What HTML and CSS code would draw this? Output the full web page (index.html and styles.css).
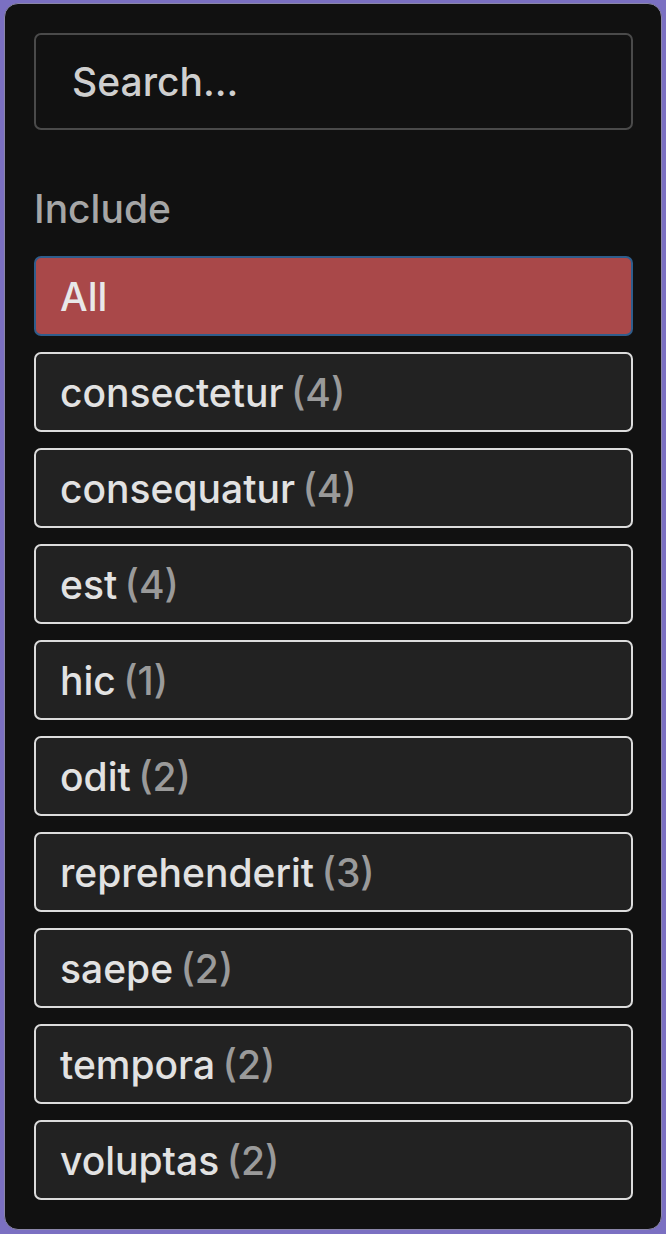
FILE: index.html
```html
<!DOCTYPE html>
<html>
<head>
<meta charset="utf-8">
<link rel="stylesheet" href="styles.css">
</head>
<body>
<div class="panel">
  <input class="search" type="text" placeholder="Search...">
  <div class="label">Include</div>
  <div class="list">
    <div class="item active">All</div>
    <div class="item">consectetur <span class="count">(4)</span></div>
    <div class="item">consequatur <span class="count">(4)</span></div>
    <div class="item">est <span class="count">(4)</span></div>
    <div class="item">hic <span class="count">(1)</span></div>
    <div class="item">odit <span class="count">(2)</span></div>
    <div class="item">reprehenderit <span class="count">(3)</span></div>
    <div class="item">saepe <span class="count">(2)</span></div>
    <div class="item">tempora <span class="count">(2)</span></div>
    <div class="item">voluptas <span class="count">(2)</span></div>
  </div>
</div>
</body>
</html>
```
FILE: styles.css
```css
html, body {
  margin: 0;
  padding: 0;
}
body {
  background: #7b70c2;
  width: 666px;
  height: 1234px;
  padding: 3px 4px 4px 4px;
  box-sizing: border-box;
  font-family: Inter, "Noto Sans", sans-serif;
}
.panel {
  background: #111111;
  border: 1px solid #8a86a8;
  border-radius: 14px;
  height: 100%;
  box-sizing: border-box;
  padding: 29px 28px 0 29px;
  display: flex;
  flex-direction: column;
}
.search {
  flex-shrink: 0;
  height: 97px;
  box-sizing: border-box;
  background: #111111;
  border: 2px solid #4a4a4a;
  border-radius: 7px;
  padding: 0 36px;
  font-family: inherit;
  font-size: 39px;
  font-weight: 500;
  color: #d0d0d0;
  outline: none;
}
.search::placeholder {
  color: #cfcfcf;
}
.label {
  flex-shrink: 0;
  margin-top: 55px;
  font-size: 39px;
  font-weight: 500;
  color: #a6a6a6;
  line-height: 48px;
}
.list {
  flex-shrink: 0;
  margin-top: 23px;
  display: flex;
  flex-direction: column;
  gap: 16px;
}
.item {
  flex-shrink: 0;
  height: 80px;
  box-sizing: border-box;
  border: 2px solid #dcdcdc;
  border-radius: 7px;
  background: #222222;
  color: #e2e2e2;
  font-size: 39px;
  font-weight: 500;
  display: flex;
  align-items: center;
  padding: 0 24px;
  white-space: pre;
  word-spacing: -3px;
}
.item.active {
  background: #a94849;
  border-color: #2f5d8c;
  color: #e8e8e8;
}
.count {
  color: #9a9a9a;
}
```
